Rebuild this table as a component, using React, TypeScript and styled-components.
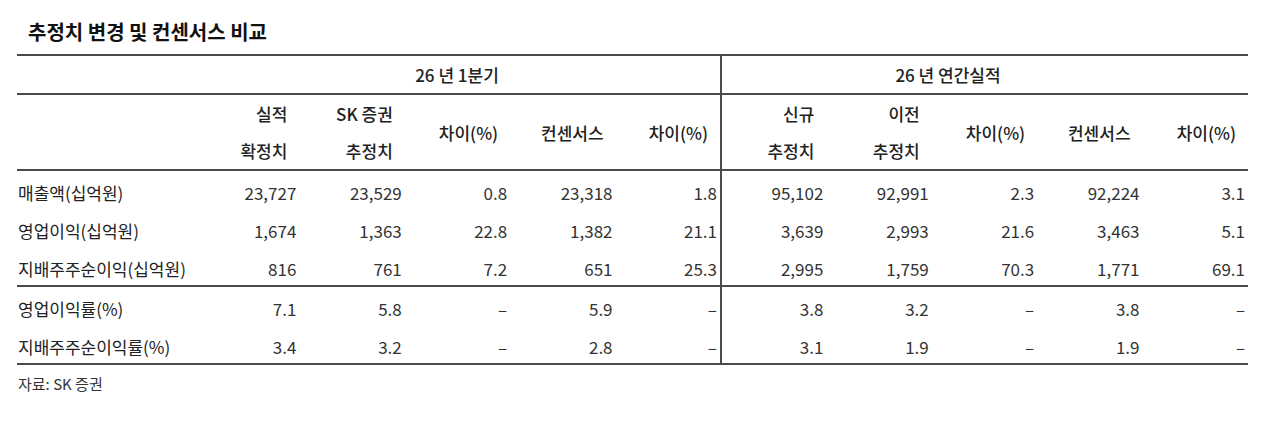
import React from 'react';
import styled, { createGlobalStyle } from 'styled-components';

const GlobalStyle = createGlobalStyle`
  body {
    margin: 0;
    background: #fff;
    font-family: "Noto Sans CJK KR", "Noto Sans", sans-serif;
    color: #222;
  }
`;

const LINE = '2px solid #4a4a4a';

const Page = styled.div`
  padding: 20px 0 0 17px;
  width: 1231px;
`;

const Title = styled.h1`
  margin: 0 0 10px 11px;
  font-size: 20px;
  line-height: 24px;
  font-weight: 700;
  color: #111;
`;

const Table = styled.table`
  width: 1231px;
  table-layout: fixed;
  border-collapse: collapse;
  border-top: ${LINE};
  border-bottom: ${LINE};
  font-size: 17px;
`;

const GroupCell = styled.th<{ $split?: boolean; $pr?: number }>`
  height: 37px;
  padding: 0 ${({ $pr }) => $pr ?? 0}px 0 0;
  font-weight: 500;
  text-align: center;
  border-bottom: ${LINE};
  border-right: ${({ $split }) => ($split ? LINE : 'none')};
`;

const HeadCell = styled.th<{ $split?: boolean }>`
  height: 74px;
  padding: 0 12px 0 0;
  font-weight: 500;
  line-height: 37px;
  text-align: right;
  white-space: pre-line;
  vertical-align: middle;
  border-right: ${({ $split }) => ($split ? LINE : 'none')};
`;

const Row = styled.tr<{ $divider?: boolean }>`
  border-top: ${({ $divider }) => ($divider ? LINE : 'none')};
`;

const LabelCell = styled.td`
  height: 34px;
  padding: 4px 0 0 1px;
  text-align: left;
  white-space: nowrap;
`;

const NumCell = styled.td<{ $split?: boolean }>`
  height: 34px;
  padding: 4px 3px 0 0;
  text-align: right;
  color: #333;
  border-right: ${({ $split }) => ($split ? LINE : 'none')};
`;

const Source = styled.div`
  margin-top: 9px;
  padding-left: 1px;
  font-size: 15px;
  line-height: 20px;
  color: #333;
`;

const headers = [
  '실적\n확정치', 'SK 증권\n추정치', '차이(%)', '컨센서스', '차이(%)',
  '신규\n추정치', '이전\n추정치', '차이(%)', '컨센서스', '차이(%)',
];

const rows: string[][] = [
  ['매출액(십억원)', '23,727', '23,529', '0.8', '23,318', '1.8', '95,102', '92,991', '2.3', '92,224', '3.1'],
  ['영업이익(십억원)', '1,674', '1,363', '22.8', '1,382', '21.1', '3,639', '2,993', '21.6', '3,463', '5.1'],
  ['지배주주순이익(십억원)', '816', '761', '7.2', '651', '25.3', '2,995', '1,759', '70.3', '1,771', '69.1'],
  ['영업이익률(%)', '7.1', '5.8', '–', '5.9', '–', '3.8', '3.2', '–', '3.8', '–'],
  ['지배주주순이익률(%)', '3.4', '3.2', '–', '2.8', '–', '3.1', '1.9', '–', '1.9', '–'],
];

const App = () => (
  <>
    <GlobalStyle />
    <Page>
      <Title>추정치 변경 및 컨센서스 비교</Title>
      <Table>
        <colgroup>
          <col style={{ width: 177 }} />
          {headers.map((_, i) => <col key={i} style={{ width: 105.4 }} />)}
        </colgroup>
        <thead>
          <tr>
            <GroupCell />
            <GroupCell colSpan={5} $split>26 년 1분기</GroupCell>
            <GroupCell colSpan={5} $pr={74}>26 년 연간실적</GroupCell>
          </tr>
          <tr>
            <HeadCell />
            {headers.map((h, i) => <HeadCell key={i} $split={i === 4}>{h}</HeadCell>)}
          </tr>
        </thead>
        <tbody>
          {rows.map((r, ri) => (
            <Row key={ri} $divider={ri === 0 || ri === 3}>
              <LabelCell>{r[0]}</LabelCell>
              {r.slice(1).map((v, i) => <NumCell key={i} $split={i === 4}>{v}</NumCell>)}
            </Row>
          ))}
        </tbody>
      </Table>
      <Source>자료: SK 증권</Source>
    </Page>
  </>
);

export default App;
